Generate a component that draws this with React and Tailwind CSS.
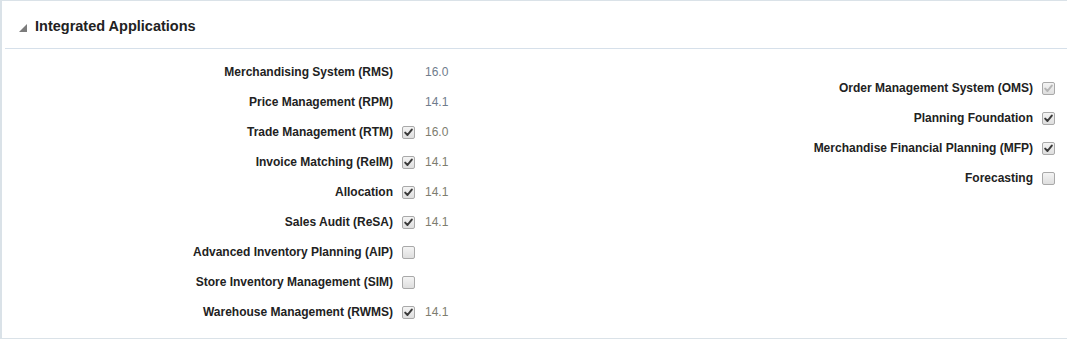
import React from "react";

function Check({ checked, disabled }) {
  return (
    <span className="inline-flex h-[13px] w-[13px] items-center justify-center rounded-[2px] border border-[#a9a9a9] bg-gradient-to-b from-[#f4f4f4] to-[#dedede]">
      {checked && (
        <svg width="9" height="9" viewBox="0 0 9 9">
          <path
            d="M1.2 4.6 L3.5 7 L7.8 1.6"
            fill="none"
            stroke={disabled ? "#b5b5b5" : "#3a3a3a"}
            strokeWidth="2"
            strokeLinecap="round"
            strokeLinejoin="round"
          />
        </svg>
      )}
    </span>
  );
}

const left = [
  { label: "Merchandising System (RMS)", box: null, ver: "16.0", blue: true },
  { label: "Price Management (RPM)", box: null, ver: "14.1", blue: true },
  { label: "Trade Management (RTM)", box: true, ver: "16.0" },
  { label: "Invoice Matching (ReIM)", box: true, ver: "14.1" },
  { label: "Allocation", box: true, ver: "14.1" },
  { label: "Sales Audit (ReSA)", box: true, ver: "14.1" },
  { label: "Advanced Inventory Planning (AIP)", box: false, ver: "" },
  { label: "Store Inventory Management (SIM)", box: false, ver: "" },
  { label: "Warehouse Management (RWMS)", box: true, ver: "14.1" },
];

const right = [
  { label: "Order Management System (OMS)", box: true, disabled: true },
  { label: "Planning Foundation", box: true },
  { label: "Merchandise Financial Planning (MFP)", box: true },
  { label: "Forecasting", box: false },
];

export default function App() {
  return (
    <div
      className="h-[340px] w-[1067px] bg-white text-[#333]"
      style={{ fontFamily: '"Liberation Sans", Arial, sans-serif' }}
    >
      <div className="h-[339px] border-t border-b border-l-2 border-[#dae2e8]">
        <div className="ml-[3px] flex h-[48px] items-center border-b border-[#d6e0ea] pl-[14px] pt-[5px]">
          <svg width="8" height="8" viewBox="0 0 8 8" className="mr-[8px] mt-[1px]">
            <path d="M8 0 L8 8 L0 8 Z" fill="#7c7c7c" />
          </svg>
          <span className="text-[14.5px] font-bold text-[#222]">Integrated Applications</span>
        </div>
        <div className="flex justify-between pt-[8px]">
          <div className="grid grid-cols-[391px_13px_auto] items-center gap-x-0">
            {left.map((r) => (
              <React.Fragment key={r.label}>
                <div className="flex h-[30px] items-center justify-end text-[12px] font-bold text-[#222]">
                  {r.label}
                </div>
                <div className="ml-[9px] flex h-[30px] w-[13px] items-center">
                  {r.box !== null && <Check checked={r.box} />}
                </div>
                <div
                  className={
                    "flex h-[30px] items-center pl-[19px] text-[12px] " +
                    (r.blue ? "text-[#6f7c8c]" : "text-[#7d7d6f]")
                  }
                >
                  {r.ver}
                </div>
              </React.Fragment>
            ))}
          </div>
          <div className="flex flex-col pr-[12px] pt-[16px]">
            {right.map((r) => (
              <div key={r.label} className="flex h-[30px] items-center justify-end">
                <span className="text-[12px] font-bold text-[#222]">{r.label}</span>
                <span className="ml-[9px] flex">
                  <Check checked={r.box} disabled={r.disabled} />
                </span>
              </div>
            ))}
          </div>
        </div>
      </div>
    </div>
  );
}
